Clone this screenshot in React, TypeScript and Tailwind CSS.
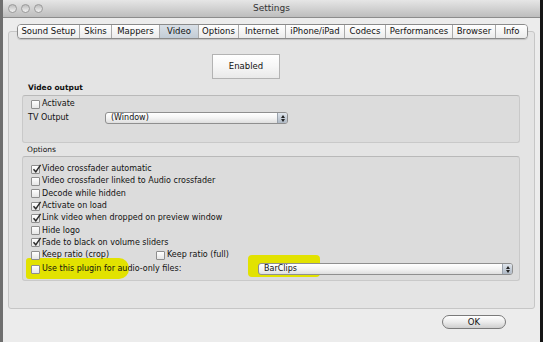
import React from 'react'

const tabs = [
  { label: 'Sound Setup', w: 61 },
  { label: 'Skins', w: 32 },
  { label: 'Mappers', w: 48 },
  { label: 'Video', w: 39, active: true },
  { label: 'Options', w: 40 },
  { label: 'Internet', w: 47 },
  { label: 'iPhone/iPad', w: 59 },
  { label: 'Codecs', w: 41 },
  { label: 'Performances', w: 67 },
  { label: 'Browser', w: 43 },
  { label: 'Info', w: 32 },
]

function Checkbox({ checked }: { checked?: boolean }) {
  return (
    <span className="relative inline-block w-[9px] h-[9px] shrink-0 border border-[#8e8e8e] rounded-[1px] bg-gradient-to-b from-white to-[#e6e6e6]">
      {checked && (
        <svg className="absolute -top-[2px] left-0" width="10" height="10" viewBox="0 0 10 10">
          <path d="M1.5 5.2 L3.8 7.8 L8.6 0.8" fill="none" stroke="#2b2b2b" strokeWidth="1.5" />
        </svg>
      )}
    </span>
  )
}

function CheckRow({ label, checked }: { label: string; checked?: boolean }) {
  return (
    <div className="flex items-center gap-[2px] h-[12.3px] pl-[8px]">
      <Checkbox checked={checked} />
      <span>{label}</span>
    </div>
  )
}

function Select({ value, className }: { value: string; className: string }) {
  return (
    <div className={`flex h-[12px] border border-[#8f8f8f] rounded-[3px] overflow-hidden bg-gradient-to-b from-white via-[#f4f4f4] to-[#dedede] ${className}`}>
      <span className="flex-1 pl-[5px] leading-[10px]">{value}</span>
      <span className="w-[10px] border-l border-[#9aa2ac] bg-gradient-to-b from-[#dfe5ec] to-[#aeb8c4] flex flex-col items-center justify-center gap-[1px]">
        <svg width="4" height="3" viewBox="0 0 4 3"><path d="M0 3 L2 0 L4 3Z" fill="#222" /></svg>
        <svg width="4" height="3" viewBox="0 0 4 3"><path d="M0 0 L2 3 L4 0Z" fill="#222" /></svg>
      </span>
    </div>
  )
}

export default function App() {
  return (
    <div className="w-[543px] h-[353px] bg-white overflow-hidden font-['DejaVu_Sans',sans-serif] text-[8px] text-[#111]">
      <div className="flex h-[342px]">
        <div className="w-[3px] bg-[#6f6f6f]" />
        <div className="flex-1 flex flex-col bg-[#ececec]">
          {/* Title bar */}
          <div className="relative h-[18px] flex items-center justify-center bg-gradient-to-b from-[#e6e6e6] to-[#bdbdbd] border-b border-[#8c8c8c]">
            <div className="absolute left-[5px] top-[4px] flex gap-[4px]">
              {[0, 1, 2].map((i) => (
                <span key={i} className="w-[9px] h-[9px] rounded-full border border-[#9a9a9a] bg-gradient-to-b from-[#bdbdbd] to-[#f2f2f2]" />
              ))}
            </div>
            <span className="text-[9px] text-[#333]">Settings</span>
          </div>

          <div className="flex-1 flex flex-col px-[5px]">
            {/* Tabs */}
            <div className="relative z-10 mt-[6px] ml-[9px] flex h-[15px]">
              <div className="flex border border-[#8a8a8a] rounded-[4px] overflow-hidden shadow-[0_1px_1px_rgba(0,0,0,0.15)]">
                {tabs.map((t, i) => (
                  <div
                    key={t.label}
                    style={{ width: t.w }}
                    className={`flex items-center justify-center text-[8.5px] ${i > 0 ? 'border-l border-[#aaaaaa]' : ''} ${t.active ? 'bg-gradient-to-b from-[#d9e0e7] to-[#c3ccd6]' : 'bg-gradient-to-b from-white to-[#ebebeb]'}`}
                  >
                    {t.label}
                  </div>
                ))}
              </div>
            </div>

            {/* Tab panel */}
            <div className="-mt-[8px] h-[278px] border border-[#c6c6c6] rounded-[3px] bg-[#e4e4e4] flex flex-col">
              <div className="mt-[22px] ml-[203px] w-[68px] h-[25px] border border-[#b3b3b3] bg-gradient-to-b from-white via-[#f6f6f6] to-[#e9e9e9] flex items-center justify-center text-[8.5px]">
                Enabled
              </div>

              <div className="mt-[4px] ml-[19px] h-[10px] leading-[10px] font-bold text-[7.5px]">Video output</div>
              <div className="mt-[2px] ml-[13px] mr-[14px] h-[48px] border border-[#c9c9c9] border-t-[#b9b9b9] rounded-[3px] bg-[#dcdcdc] pt-[2px]">
                <CheckRow label="Activate" />
                <div className="flex items-center h-[12px] mt-[2px]">
                  <span className="pl-[5px] w-[82px]">TV Output</span>
                  <Select value="(Window)" className="w-[183px]" />
                </div>
              </div>

              <div className="mt-[2px] ml-[18px] h-[10px] leading-[10px] text-[7.5px]">Options</div>
              <div className="relative mt-[1px] ml-[13px] mr-[14px] h-[125px] border border-[#c9c9c9] border-t-[#b9b9b9] rounded-[3px] bg-[#dcdcdc] pt-[6px]">
                {/* marker highlights, behind the rows */}
                <div className="absolute left-[3px] top-[101px] w-[103px] h-[21px] rounded-r-[10px] rounded-l-[3px] bg-[#e2e200]" />
                <div className="absolute left-[225px] top-[98px] w-[72px] h-[22px] rounded-[4px] bg-[#e2e200]" />
                <div className="relative">
                  <CheckRow label="Video crossfader automatic" checked />
                  <CheckRow label="Video crossfader linked to Audio crossfader" />
                  <CheckRow label="Decode while hidden" />
                  <CheckRow label="Activate on load" checked />
                  <CheckRow label="Link video when dropped on preview window" checked />
                  <CheckRow label="Hide logo" />
                  <CheckRow label="Fade to black on volume sliders" checked />
                  <div className="flex h-[12.3px]">
                    <div className="w-[125px]">
                      <CheckRow label="Keep ratio (crop)" />
                    </div>
                    <CheckRow label="Keep ratio (full)" />
                  </div>
                  <div className="flex items-center h-[12px] mt-[2px]">
                    <div className="w-[235px]">
                      <CheckRow label="Use this plugin for audio-only files:" />
                    </div>
                    <Select value="BarClips" className="w-[255px]" />
                  </div>
                </div>
              </div>
            </div>

            {/* Footer */}
            <div className="flex justify-end pr-[29px] mt-[6px]">
              <div className="w-[64px] h-[14px] rounded-full border border-[#7a7a7a] bg-gradient-to-b from-white via-[#ececec] to-[#cfcfcf] flex items-center justify-center text-[8.5px]">
                OK
              </div>
            </div>
          </div>
        </div>
        <div className="w-[3px] bg-[#151515]" />
      </div>
    </div>
  )
}
